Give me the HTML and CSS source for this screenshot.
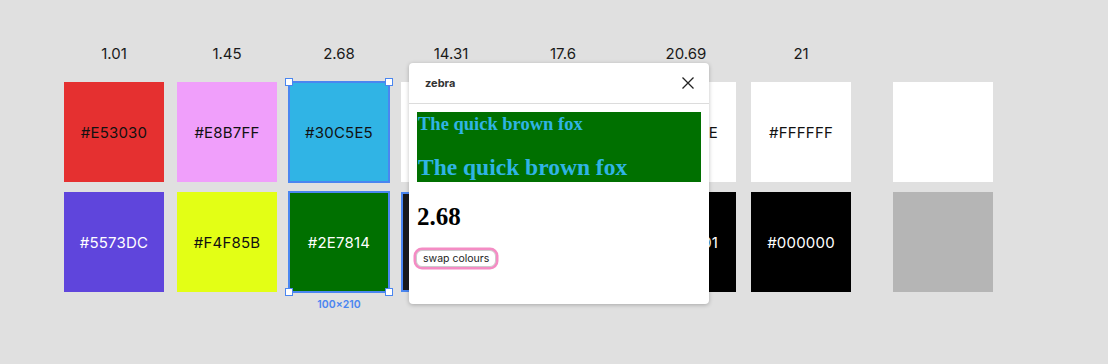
FILE: index.html
```html
<!DOCTYPE html>
<html lang="en">
<head>
  <meta charset="UTF-8" />
  <title>Contrast</title>
  <link rel="stylesheet" href="styles.css">
</head>
<body>
  <div class="canvas">
    <!-- Swatch columns -->
    <div class="palette">
      <div class="col">
        <div class="ratio">1.01</div>
        <div class="swatch" style="background:#E53030">#E53030</div>
        <div class="swatch light" style="background:#5F45DC">#5573DC</div>
      </div>
      <div class="col">
        <div class="ratio">1.45</div>
        <div class="swatch" style="background:#F09FFB">#E8B7FF</div>
        <div class="swatch" style="background:#E3FF15">#F4F85B</div>
      </div>
      <div class="col selected">
        <div class="ratio">2.68</div>
        <div class="swatch" style="background:#30B4E5">#30C5E5</div>
        <div class="swatch light" style="background:#007000">#2E7814</div>
        <span class="handle tl"></span>
        <span class="handle tr"></span>
        <span class="handle bl"></span>
        <span class="handle br"></span>
        <span class="size-tag">100×210</span>
      </div>
      <!-- these two sit under the panel -->
      <div class="col">
        <div class="ratio">14.31</div>
        <div class="swatch" style="background:#fff"></div>
        <div class="swatch light hovered" style="background:#1a1a1a"></div>
      </div>
      <div class="col">
        <div class="ratio">17.6</div>
        <div class="swatch" style="background:#fff"></div>
        <div class="swatch light" style="background:#000"></div>
      </div>
      <div class="col wide-gap">
        <div class="ratio">20.69</div>
        <div class="swatch" style="background:#fff">#FFFFFE</div>
        <div class="swatch light" style="background:#000">#000001</div>
      </div>
      <div class="col">
        <div class="ratio">21</div>
        <div class="swatch" style="background:#fff">#FFFFFF</div>
        <div class="swatch light" style="background:#000">#000000</div>
      </div>
      <div class="col spare">
        <div class="ratio"></div>
        <div class="swatch" style="background:#fff"></div>
        <div class="swatch" style="background:#b5b5b5"></div>
      </div>
    </div>

    <!-- Floating preview panel -->
    <div class="panel">
      <div class="panel-head">
        <span class="panel-title">zebra</span>
        <svg class="close" width="14" height="14" viewBox="0 0 14 14">
          <path d="M1.5 1.5 L12.5 12.5 M12.5 1.5 L1.5 12.5" stroke="#222" stroke-width="1.3" fill="none"/>
        </svg>
      </div>
      <div class="panel-body">
        <div class="sample">
          <p class="sample-small">The quick brown fox</p>
          <p class="sample-large">The quick brown fox</p>
        </div>
        <div class="score">2.68</div>
        <button class="swap">swap colours</button>
      </div>
    </div>
  </div>
</body>
</html>
```

FILE: styles.css
```css
/* Base */
body {
  margin: 0;
  background: #e0e0e0;
  font-family: "Inter", "Liberation Sans", sans-serif;
  color: #1a1a1a;
}

.canvas {
  position: relative;
  width: 1108px;
  height: 364px;
  overflow: hidden;
}

/***** Palette *****/
.palette {
  display: flex;
  gap: 12px;
  padding: 45px 0 0 64px;
}

.col {
  position: relative;
  display: flex;
  flex-direction: column;
  gap: 10px;
  width: 100px;
}
.col:nth-child(2) { margin-left: 1px; }
.col.wide-gap { margin-left: 11px; }
.col:nth-child(7) { margin-left: 3px; }
.col.spare { margin-left: 30px; }

.ratio {
  height: 17px;
  margin-bottom: 10px;
  text-align: center;
  font-size: 15px;
  line-height: 17px;
  color: #1a1a1a;
}

.swatch {
  height: 100px;
  display: flex;
  align-items: center;
  justify-content: center;
  font-size: 15px;
  color: #111;
  letter-spacing: 0.2px;
}
.swatch.light {
  color: #fff;
}
.swatch.hovered {
  outline: 2px solid #4a86f0;
  outline-offset: -2px;
}

/***** Selection *****/
.col.selected .swatch {
  outline: 2px solid #4a86f0;
  outline-offset: -1px;
}
.handle {
  position: absolute;
  width: 6px;
  height: 6px;
  background: #fff;
  border: 1px solid #4a86f0;
}
.handle.tl { left: -4px; top: 33px; }
.handle.tr { right: -4px; top: 33px; }
.handle.bl { left: -4px; top: 243px; }
.handle.br { right: -4px; top: 243px; }

.size-tag {
  position: absolute;
  top: 253px;
  left: 0;
  right: 0;
  text-align: center;
  font-size: 10.5px;
  font-weight: 600;
  color: #4a86f0;
}

/***** Panel *****/
.panel {
  position: absolute;
  left: 409px;
  top: 63px;
  width: 300px;
  height: 241px;
  background: #fff;
  border-radius: 4px;
  box-shadow: 0 1px 4px rgba(0, 0, 0, 0.25);
}

.panel-head {
  display: flex;
  align-items: center;
  justify-content: space-between;
  height: 40px;
  padding: 0 14px 0 16px;
  border-bottom: 1px solid #dcdcdc;
}
.panel-title {
  font-size: 11px;
  font-weight: 700;
  color: #333;
}

.panel-body {
  padding: 8px;
}

.sample {
  background: #007000;
  color: #30B4E5;
  font-family: "Liberation Serif", serif;
  font-weight: 700;
  height: 70px;
  padding: 0 1px;
  overflow: hidden;
}
.sample p {
  margin: 0;
}
.sample-small {
  font-size: 18.5px;
  line-height: 24px;
}
.sample-large {
  margin-top: 18px !important;
  font-size: 23.5px;
  line-height: 27px;
}

.score {
  margin: 21px 0 0 0;
  font-family: "Liberation Serif", serif;
  font-weight: 700;
  font-size: 25px;
  color: #000;
}

.swap {
  margin: 19px 0 0 -1px;
  padding: 1px 6px;
  font-family: "Inter", "Liberation Sans", sans-serif;
  font-size: 10.5px;
  color: #222;
  background: #fff;
  border: 1px solid #ccc;
  border-radius: 6px;
  box-shadow: 0 0 0 2.5px #f48cc4;
}
```
